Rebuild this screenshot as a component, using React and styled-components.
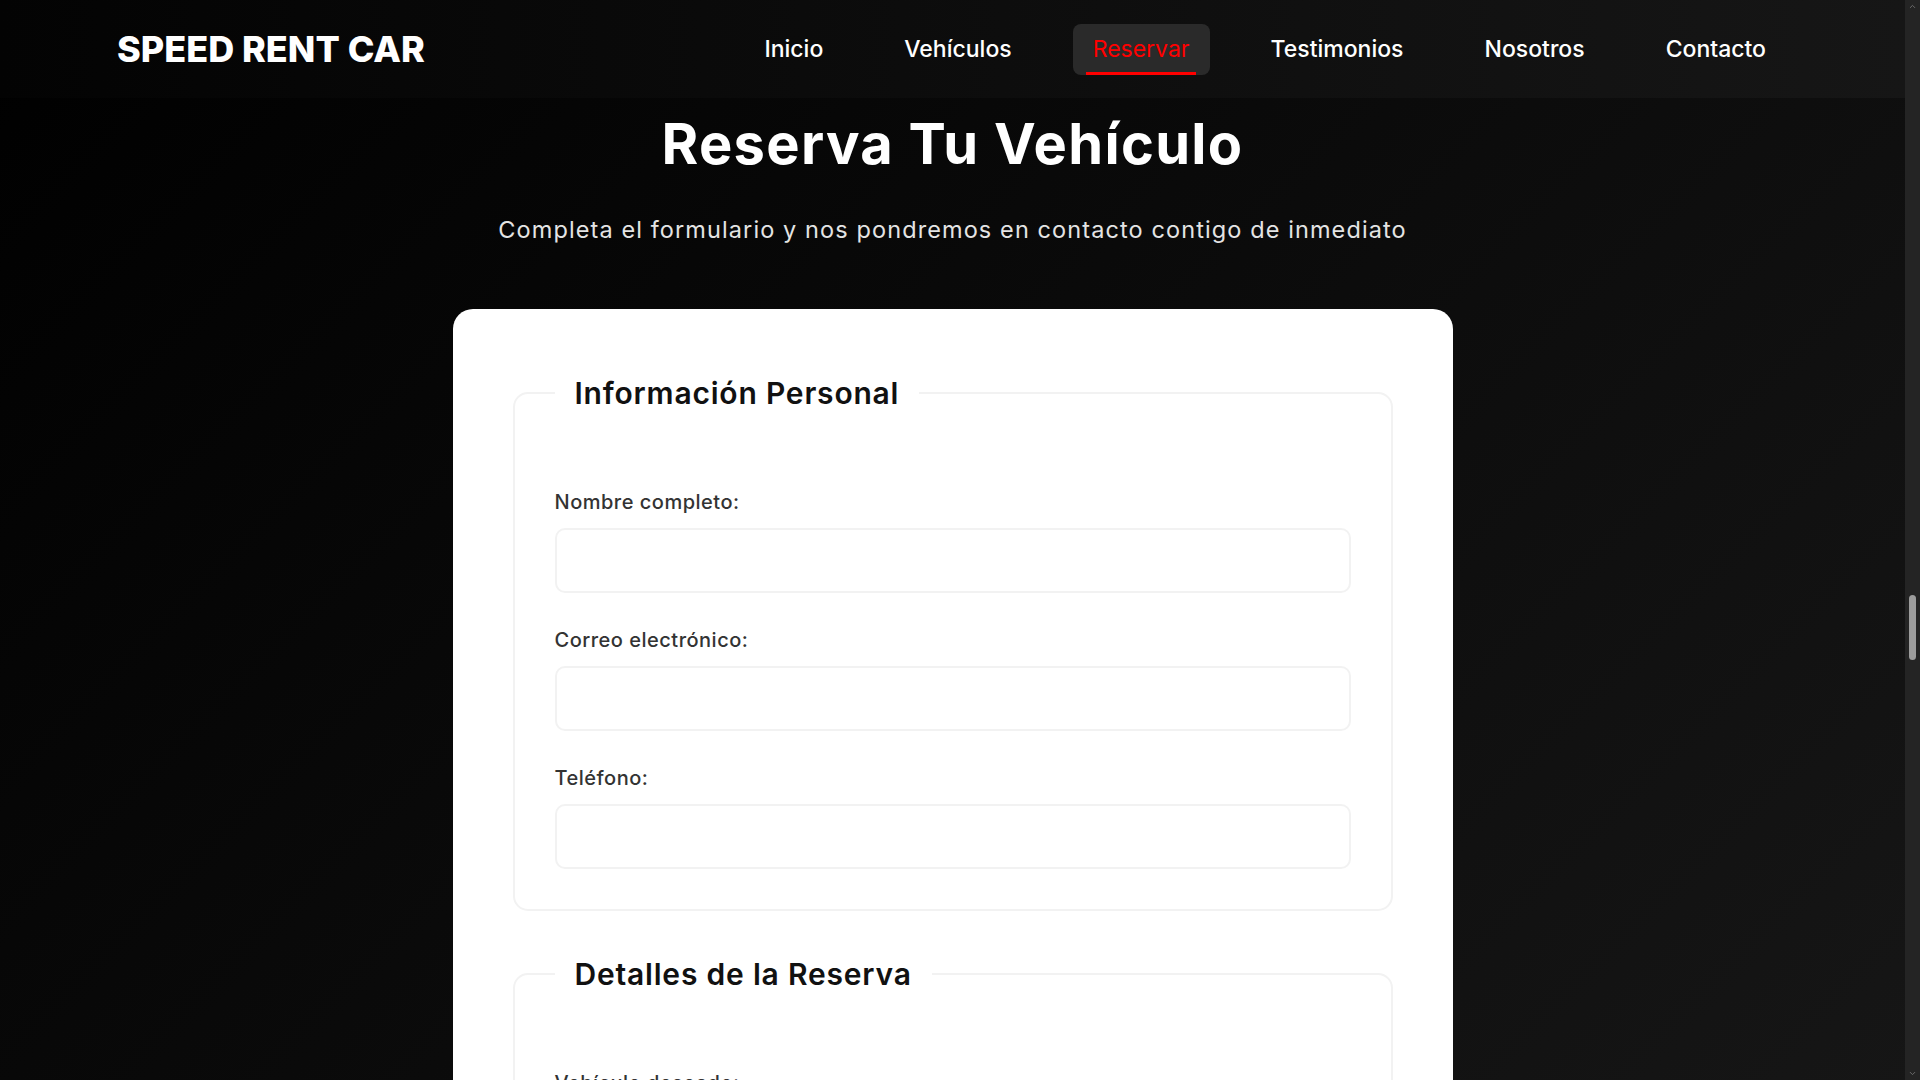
import React from 'react';
import styled, { createGlobalStyle, css } from 'styled-components';
import { ChevronUp, ChevronDown } from 'lucide-react';

const NAV_LINKS = ['Inicio', 'Vehículos', 'Reservar', 'Testimonios', 'Nosotros', 'Contacto'];

const GlobalStyle = createGlobalStyle`
  body {
    margin: 0;
    background: #000;
    font-family: Inter, "Noto Sans", sans-serif;
    color: #fff;
  }
  * {
    box-sizing: border-box;
  }
`;

const Shell = styled.div`
  display: flex;
  align-items: flex-start;
  min-height: 100vh;
  background: linear-gradient(135deg, #000000 0%, #161616 100%);
  background-attachment: fixed;
`;

const Main = styled.main`
  flex: 1;
  min-width: 0;
`;

// mimics the browser's dark scrollbar seen in the screenshot
const Rail = styled.aside`
  position: sticky;
  top: 0;
  flex: 0 0 15px;
  height: 100vh;
  display: flex;
  flex-direction: column;
  align-items: center;
  justify-content: space-between;
  padding: 2px 0;
  background: #242424;
  color: #6e6e6e;
`;

const Thumb = styled.div`
  width: 7px;
  height: 65px;
  margin-top: 584px;
  border-radius: 4px;
  background: #9c9c9c;
`;

const Spacer = styled.div`
  flex: 1;
`;

const Header = styled.header`
  height: 98px;
  display: flex;
  align-items: center;
  justify-content: space-between;
  padding: 0 119px 0 117px;
  background: linear-gradient(90deg, #030303 0%, #161616 100%);
`;

const Logo = styled.div`
  font-size: 36px;
  font-weight: 800;
  color: #fff;
`;

const NavList = styled.nav`
  display: flex;
  align-items: center;
  gap: 41px;
`;

const NavLink = styled.a`
  position: relative;
  padding: 8px 20px;
  font-size: 23px;
  line-height: 35px;
  font-weight: 500;
  color: #fff;
  text-decoration: none;
  border-radius: 8px;

  ${(p) =>
    p.$active &&
    css`
      background: #2a2a2a;
      color: #ff0000;
      font-weight: 400;
      &::after {
        content: '';
        position: absolute;
        left: 10%;
        bottom: 0;
        width: 80%;
        height: 3px;
        background: #ff0000;
      }
    `}
`;

const Hero = styled.section`
  text-align: center;
  padding: 13px 20px 0;
`;

const Title = styled.h1`
  margin: 0;
  font-size: 56px;
  line-height: 1.2;
  font-weight: 700;
  letter-spacing: 1.3px;
  color: #fff;
`;

const Subtitle = styled.p`
  margin: 34px 0 62px;
  font-size: 23.5px;
  line-height: 1.5;
  letter-spacing: 1.1px;
  color: #e4e4e4;
`;

const Card = styled.form`
  max-width: 1000px;
  margin: 0 auto 80px;
  padding: 66px 60px 60px;
  background: #fff;
  border-radius: 20px;
  text-align: left;
`;

const Fieldset = styled.fieldset`
  margin: 0 0 45px;
  padding: 77px 40px 40px;
  border: 2px solid #f2f2f2;
  border-radius: 15px;
`;

const Legend = styled.legend`
  padding: 0 20px;
  font-size: 30px;
  line-height: 1.2;
  font-weight: 600;
  letter-spacing: 0.8px;
  color: #111;
`;

const Group = styled.div`
  margin-bottom: 33px;

  &:last-child {
    margin-bottom: 0;
  }
`;

const Label = styled.label`
  display: block;
  margin-bottom: 12px;
  font-size: 20px;
  line-height: 28px;
  font-weight: 500;
  letter-spacing: 0.5px;
  color: #333;
`;

const Input = styled.input`
  display: block;
  width: 100%;
  height: 65px;
  padding: 0 18px;
  border: 2px solid #f2f2f2;
  border-radius: 10px;
  background: #fff;
  font: inherit;
  font-size: 18px;
  color: #333;
  color-scheme: light;
  outline: none;
`;

const Select = styled.select`
  display: block;
  width: 100%;
  height: 65px;
  padding: 0 18px;
  border: 2px solid #f2f2f2;
  border-radius: 10px;
  background: #fff;
  font: inherit;
  font-size: 18px;
  color: #333;
  color-scheme: light;
`;

export default function App() {
  return (
    <>
      <GlobalStyle />
      <Shell>
        <Main>
          <Header>
            <Logo>SPEED RENT CAR</Logo>
            <NavList>
              {NAV_LINKS.map((link) => (
                <NavLink key={link} href="#" $active={link === 'Reservar'}>
                  {link}
                </NavLink>
              ))}
            </NavList>
          </Header>

          <Hero>
            <Title>Reserva Tu Vehículo</Title>
            <Subtitle>Completa el formulario y nos pondremos en contacto contigo de inmediato</Subtitle>

            <Card onSubmit={(e) => e.preventDefault()}>
              <Fieldset>
                <Legend>Información Personal</Legend>
                <Group>
                  <Label htmlFor="nombre">Nombre completo:</Label>
                  <Input id="nombre" type="text" />
                </Group>
                <Group>
                  <Label htmlFor="email">Correo electrónico:</Label>
                  <Input id="email" type="email" />
                </Group>
                <Group>
                  <Label htmlFor="telefono">Teléfono:</Label>
                  <Input id="telefono" type="tel" />
                </Group>
              </Fieldset>

              <Fieldset>
                <Legend>Detalles de la Reserva</Legend>
                <Group>
                  <Label htmlFor="vehiculo">Vehículo deseado:</Label>
                  <Select id="vehiculo" defaultValue="">
                    <option value="">Selecciona un vehículo</option>
                  </Select>
                </Group>
                <Group>
                  <Label htmlFor="recogida">Fecha de recogida:</Label>
                  <Input id="recogida" type="date" />
                </Group>
                <Group>
                  <Label htmlFor="devolucion">Fecha de devolución:</Label>
                  <Input id="devolucion" type="date" />
                </Group>
              </Fieldset>
            </Card>
          </Hero>
        </Main>

        <Rail aria-hidden="true">
          <ChevronUp size={9} strokeWidth={2.5} />
          <Thumb />
          <Spacer />
          <ChevronDown size={9} strokeWidth={2.5} />
        </Rail>
      </Shell>
    </>
  );
}
